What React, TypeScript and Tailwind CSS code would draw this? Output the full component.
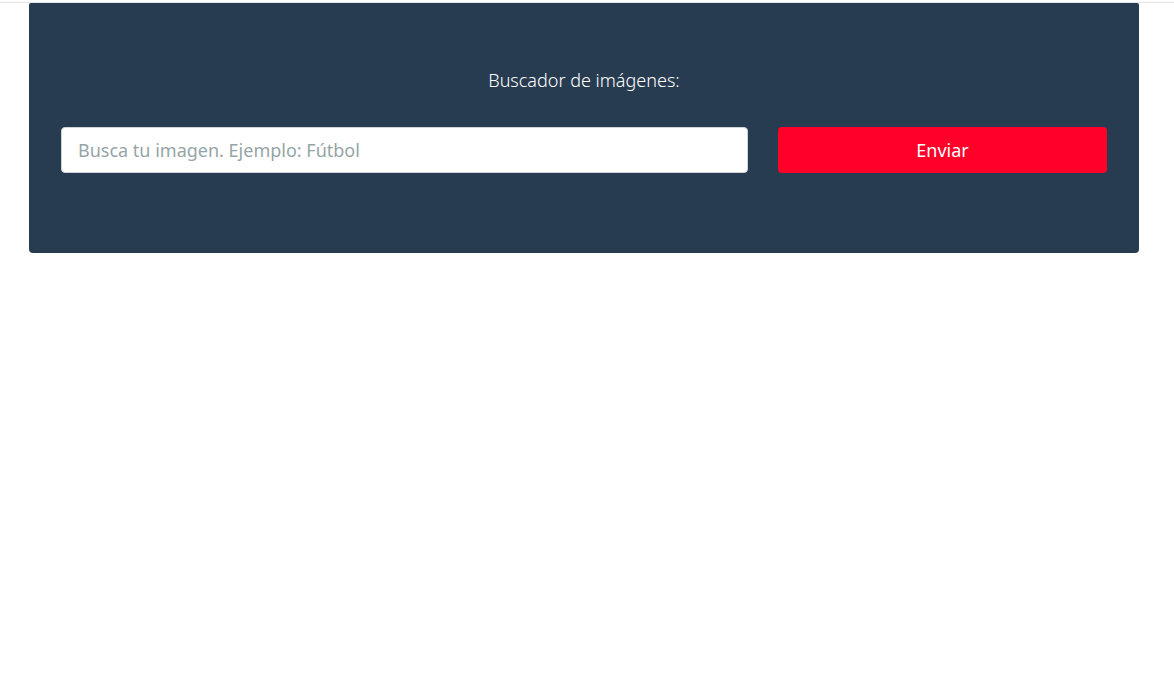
import { useState } from "react";

export default function App() {
  const [query, setQuery] = useState("");

  return (
    <div className="min-h-screen bg-white font-['Noto_Sans','Open_Sans',sans-serif]">
      <div className="mt-[2px] border-t border-[#e3e3e3]">
        <section className="ml-[29px] w-[1110px] rounded-b-[4px] rounded-t-[2px] bg-[#283c51] px-[32px] pb-[80px] pt-[64px]">
          <p className="mb-[33px] text-center text-[18px] font-light leading-[27px] text-white">
            Buscador de imágenes:
          </p>
          <form
            className="flex gap-[30px]"
            onSubmit={(e) => e.preventDefault()}
          >
            <input
              type="text"
              value={query}
              onChange={(e) => setQuery(e.target.value)}
              placeholder="Busca tu imagen. Ejemplo: Fútbol"
              className="h-[46px] w-[687px] rounded-[4px] border border-[#ced4da] bg-white px-[16px] text-[18px] text-[#2c3e50] outline-none placeholder:text-[#95a5a6]"
            />
            <button
              type="submit"
              className="h-[46px] flex-1 rounded-[4px] bg-[#ff0028] text-[18px] text-white"
            >
              Enviar
            </button>
          </form>
        </section>
      </div>
    </div>
  );
}
